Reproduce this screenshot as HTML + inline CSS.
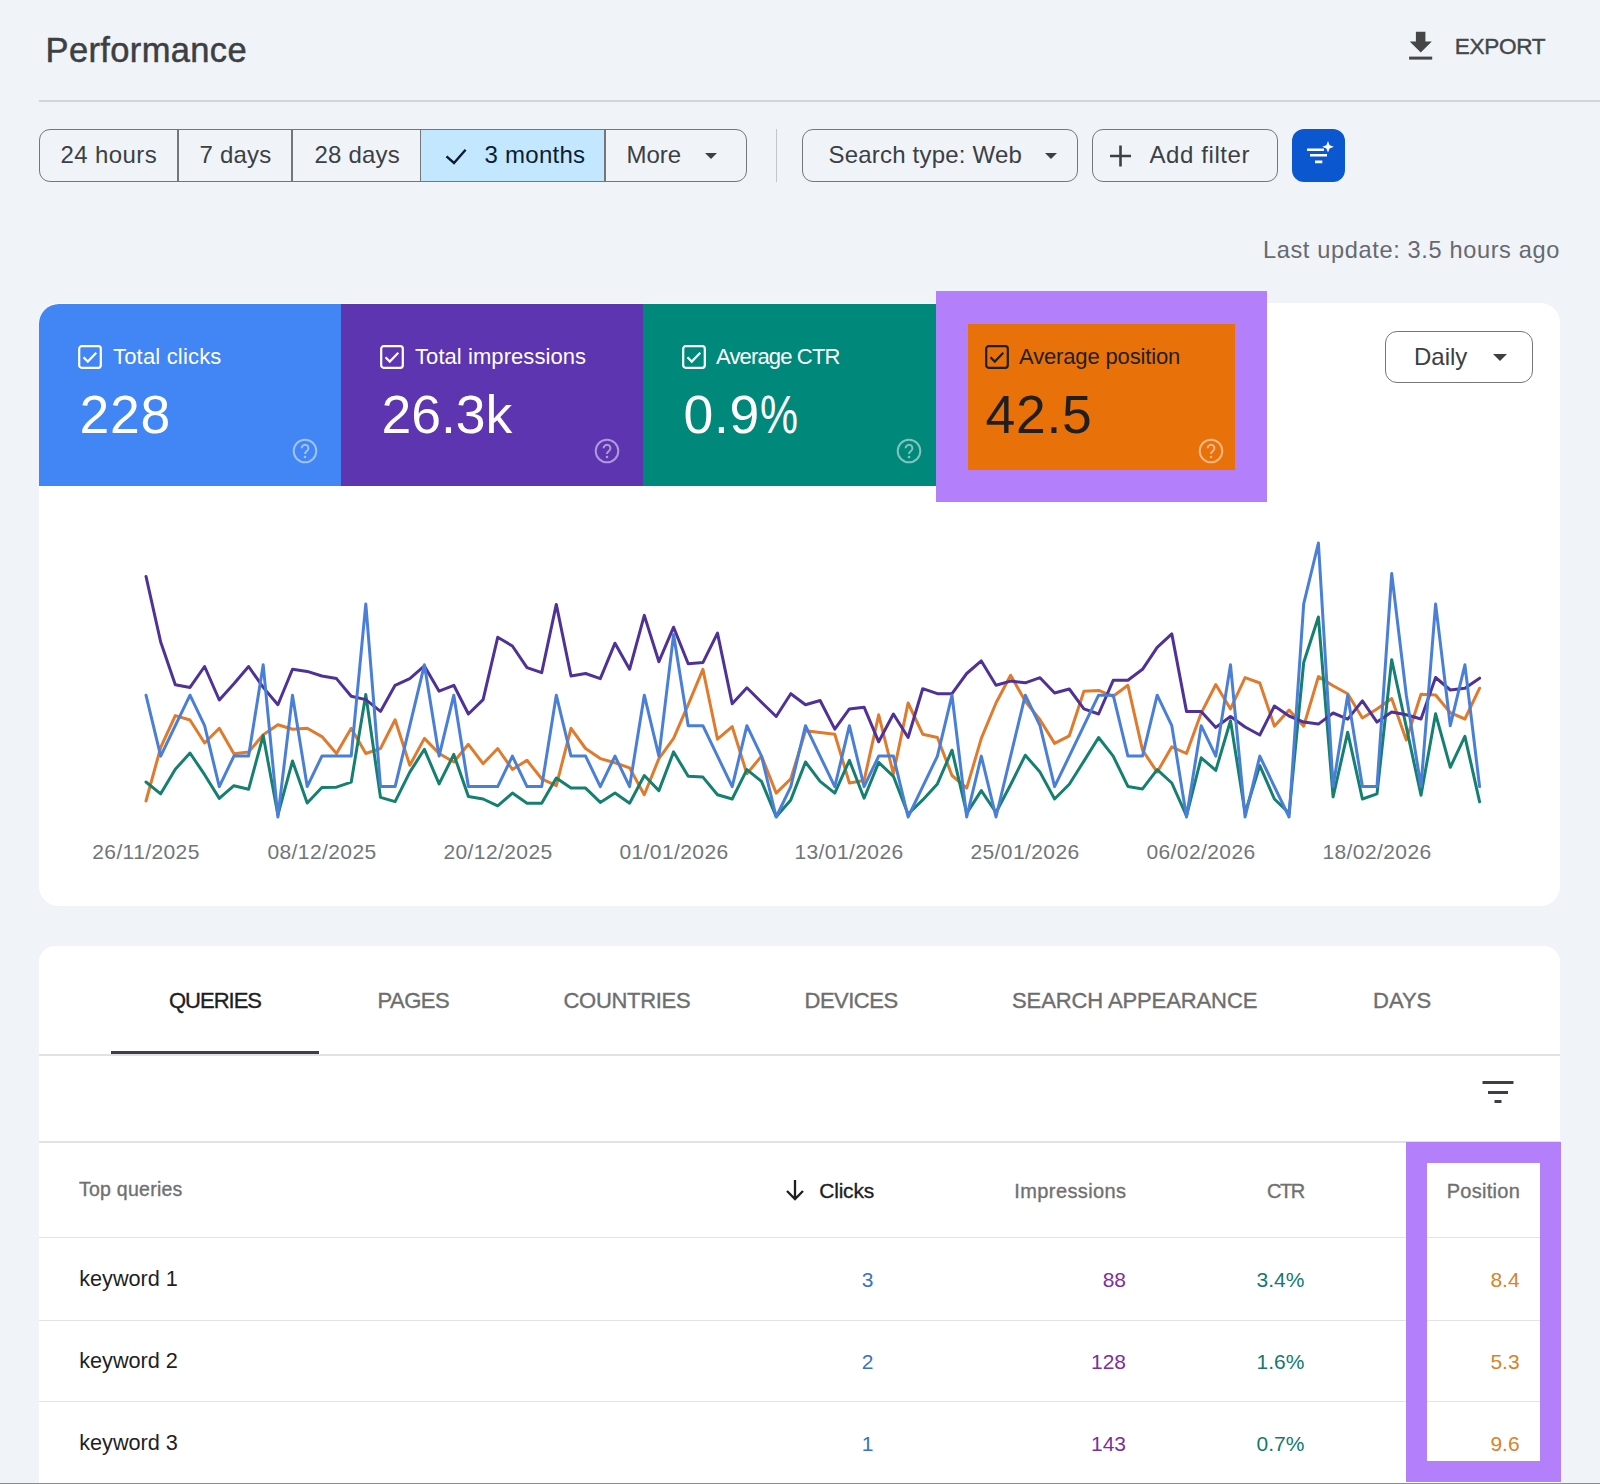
<!DOCTYPE html>
<html><head><meta charset="utf-8"><style>
html,body{margin:0;padding:0;}
body{width:1600px;height:1484px;position:relative;overflow:hidden;background:#f0f4f9;font-family:"Liberation Sans", sans-serif;}
.t{position:absolute;white-space:nowrap;line-height:1;}
</style></head><body>
<div class="t" style="left:45.6px;top:33.0px;font-size:34.5px;color:#3c4043;letter-spacing:0.35px;-webkit-text-stroke:0.5px currentColor;">Performance</div>
<div class="t" style="left:1454.8px;top:36.2px;font-size:22.6px;color:#444746;letter-spacing:-0.35px;-webkit-text-stroke:0.4px currentColor;">EXPORT</div>
<svg style="position:absolute;left:1405px;top:28px" width="32" height="36" viewBox="0 0 32 36"><path d="M10.9 3.8h9.5v9.6h6.4L15.75 24.6 4.7 13.4h6.2z" fill="#444746"/><rect x="4.1" y="28.6" width="23.1" height="3" fill="#444746"/></svg>
<div style="position:absolute;left:39px;top:100px;width:1561px;height:2px;background:#d1d5db;"></div>
<div style="position:absolute;left:38.8px;top:129.2px;width:708px;height:52.6px;box-sizing:border-box;border:1.5px solid #74777a;border-radius:11px;overflow:hidden;"><div style="position:absolute;left:380.8px;top:0;width:183.5px;height:100%;background:#c2e7ff;"></div><div style="position:absolute;left:137.35px;top:0;width:1.5px;height:100%;background:#74777a;"></div><div style="position:absolute;left:251.6px;top:0;width:1.5px;height:100%;background:#74777a;"></div><div style="position:absolute;left:380.05px;top:0;width:1.5px;height:100%;background:#74777a;"></div><div style="position:absolute;left:564.25px;top:0;width:1.5px;height:100%;background:#74777a;"></div></div>
<div class="t" style="left:60.5px;top:143.0px;font-size:24px;color:#3c4043;letter-spacing:0.4px;">24 hours</div>
<div class="t" style="left:199.5px;top:143.0px;font-size:24px;color:#3c4043;letter-spacing:0.22px;">7 days</div>
<div class="t" style="left:314.5px;top:143.0px;font-size:24px;color:#3c4043;letter-spacing:0.18px;">28 days</div>
<div class="t" style="left:484.5px;top:143.0px;font-size:24px;color:#0b1d33;letter-spacing:0.27px;">3 months</div>
<svg style="position:absolute;left:443px;top:145px" width="26" height="22" viewBox="0 0 26 22"><path d="M3.5 11.3L11 18 22.6 4.7" fill="none" stroke="#0b1d33" stroke-width="2.4"/></svg>
<div class="t" style="left:626.5px;top:143.0px;font-size:24px;color:#3c4043;">More</div>
<svg style="position:absolute;left:705.2px;top:152.6px" width="12" height="6" viewBox="0 0 12 6"><path d="M0 0h12L6.0 6z" fill="#3c4043"/></svg>
<div style="position:absolute;left:775.5px;top:129px;width:1.5px;height:53px;background:#c4c7c9;"></div>
<div style="position:absolute;left:802px;top:129.2px;width:276px;height:52.6px;box-sizing:border-box;border:1.5px solid #74777a;border-radius:11px;"></div>
<div class="t" style="left:828.5px;top:143.0px;font-size:24px;color:#3c4043;letter-spacing:0.2px;">Search type: Web</div>
<svg style="position:absolute;left:1044.8px;top:152.6px" width="12" height="6" viewBox="0 0 12 6"><path d="M0 0h12L6.0 6z" fill="#3c4043"/></svg>
<div style="position:absolute;left:1092px;top:129.2px;width:185.5px;height:52.6px;box-sizing:border-box;border:1.5px solid #74777a;border-radius:11px;"></div>
<svg style="position:absolute;left:1108px;top:144px" width="24" height="24" viewBox="0 0 24 24"><path d="M12.5 1.5v21M2 12h21" stroke="#3c4043" stroke-width="2.6"/></svg>
<div class="t" style="left:1149.5px;top:143.0px;font-size:24px;color:#3c4043;letter-spacing:0.59px;">Add filter</div>
<div style="position:absolute;left:1292px;top:129.2px;width:53px;height:52.6px;border-radius:12px;background:#0b57d0;"></div>
<svg style="position:absolute;left:1300px;top:136px" width="40" height="34" viewBox="0 0 40 34"><path d="M7 13.7h17M10 19.3h17M15 25.9h7.3" stroke="#ffffff" stroke-width="2.6"/><path d="M28 5l1.6 4.2 4.2 1.6-4.2 1.6L28 16.6l-1.6-4.2-4.2-1.6 4.2-1.6z" fill="#ffffff"/></svg>
<div class="t" style="right:40.0px;top:238.6px;font-size:23.6px;color:#67696e;letter-spacing:0.63px;">Last update: 3.5 hours ago</div>
<div style="position:absolute;left:39px;top:303px;width:1521px;height:603px;background:#ffffff;border-radius:20px;"></div>
<div style="position:absolute;left:39px;top:304px;width:302px;height:182px;background:#4285f4;border-top-left-radius:20px;"></div>
<div style="position:absolute;left:341px;top:304px;width:302px;height:182px;background:#5e35b1;"></div>
<div style="position:absolute;left:643px;top:304px;width:293px;height:182px;background:#00897b;"></div>
<div style="position:absolute;left:936px;top:291px;width:331px;height:211px;background:#b37ffa;"></div>
<div style="position:absolute;left:968px;top:324px;width:267px;height:146px;background:#e8710a;"></div>
<svg style="position:absolute;left:78px;top:345px" width="24" height="24" viewBox="0 0 24 24"><rect x="1.2" y="1.2" width="21.6" height="21.6" rx="2.5" fill="none" stroke="#ffffff" stroke-width="2.2"/><path d="M5.5 12.3l4.3 4.3 8.5-8.8" fill="none" stroke="#ffffff" stroke-width="2.2"/></svg>
<div class="t" style="left:113.0px;top:345.9px;font-size:22px;color:#ffffff;letter-spacing:0.18px;">Total clicks</div>
<div class="t" style="left:79.5px;top:388.0px;font-size:53.5px;color:#ffffff;letter-spacing:0.7px;">228</div>
<svg style="position:absolute;left:292.3px;top:438.3px" width="26" height="26" viewBox="0 0 26 26"><circle cx="13" cy="13" r="11.3" fill="none" stroke="rgba(255,255,255,0.5)" stroke-width="2"/><path d="M9.6 10.2a3.4 3.4 0 1 1 5.2 2.9c-1.2.8-1.8 1.4-1.8 2.9" fill="none" stroke="rgba(255,255,255,0.5)" stroke-width="2"/><circle cx="13" cy="19" r="1.3" fill="rgba(255,255,255,0.5)"/></svg>
<svg style="position:absolute;left:380px;top:345px" width="24" height="24" viewBox="0 0 24 24"><rect x="1.2" y="1.2" width="21.6" height="21.6" rx="2.5" fill="none" stroke="#ffffff" stroke-width="2.2"/><path d="M5.5 12.3l4.3 4.3 8.5-8.8" fill="none" stroke="#ffffff" stroke-width="2.2"/></svg>
<div class="t" style="left:415.0px;top:345.9px;font-size:22px;color:#ffffff;letter-spacing:0.07px;">Total impressions</div>
<div class="t" style="left:381.5px;top:388.0px;font-size:53.5px;color:#ffffff;letter-spacing:-0.05px;">26.3k</div>
<svg style="position:absolute;left:594.2px;top:438.3px" width="26" height="26" viewBox="0 0 26 26"><circle cx="13" cy="13" r="11.3" fill="none" stroke="rgba(255,255,255,0.5)" stroke-width="2"/><path d="M9.6 10.2a3.4 3.4 0 1 1 5.2 2.9c-1.2.8-1.8 1.4-1.8 2.9" fill="none" stroke="rgba(255,255,255,0.5)" stroke-width="2"/><circle cx="13" cy="19" r="1.3" fill="rgba(255,255,255,0.5)"/></svg>
<svg style="position:absolute;left:682px;top:345px" width="24" height="24" viewBox="0 0 24 24"><rect x="1.2" y="1.2" width="21.6" height="21.6" rx="2.5" fill="none" stroke="#ffffff" stroke-width="2.2"/><path d="M5.5 12.3l4.3 4.3 8.5-8.8" fill="none" stroke="#ffffff" stroke-width="2.2"/></svg>
<div class="t" style="left:716.0px;top:345.9px;font-size:22px;color:#ffffff;letter-spacing:-0.85px;">Average CTR</div>
<div class="t" style="left:683.5px;top:388.0px;font-size:53.5px;color:#ffffff;letter-spacing:0.7px;">0.9<span style="display:inline-block;transform:scaleX(0.8);transform-origin:0 0;">%</span></div>
<svg style="position:absolute;left:895.7px;top:438.3px" width="26" height="26" viewBox="0 0 26 26"><circle cx="13" cy="13" r="11.3" fill="none" stroke="rgba(255,255,255,0.5)" stroke-width="2"/><path d="M9.6 10.2a3.4 3.4 0 1 1 5.2 2.9c-1.2.8-1.8 1.4-1.8 2.9" fill="none" stroke="rgba(255,255,255,0.5)" stroke-width="2"/><circle cx="13" cy="19" r="1.3" fill="rgba(255,255,255,0.5)"/></svg>
<svg style="position:absolute;left:985px;top:345px" width="24" height="24" viewBox="0 0 24 24"><rect x="1.2" y="1.2" width="21.6" height="21.6" rx="2.5" fill="none" stroke="#1f1f1f" stroke-width="2.2"/><path d="M5.5 12.3l4.3 4.3 8.5-8.8" fill="none" stroke="#1f1f1f" stroke-width="2.2"/></svg>
<div class="t" style="left:1019.0px;top:345.9px;font-size:22px;color:#1f1f1f;letter-spacing:-0.15px;">Average position</div>
<div class="t" style="left:985.5px;top:388.0px;font-size:53.5px;color:#1f1f1f;letter-spacing:0.7px;">42.5</div>
<svg style="position:absolute;left:1198.4px;top:438.3px" width="26" height="26" viewBox="0 0 26 26"><circle cx="13" cy="13" r="11.3" fill="none" stroke="rgba(255,255,255,0.5)" stroke-width="2"/><path d="M9.6 10.2a3.4 3.4 0 1 1 5.2 2.9c-1.2.8-1.8 1.4-1.8 2.9" fill="none" stroke="rgba(255,255,255,0.5)" stroke-width="2"/><circle cx="13" cy="19" r="1.3" fill="rgba(255,255,255,0.5)"/></svg>
<div style="position:absolute;left:1385px;top:331px;width:148px;height:52px;box-sizing:border-box;border:1.5px solid #74777a;border-radius:12px;background:#fff;"></div>
<div class="t" style="left:1414.0px;top:344.7px;font-size:24px;color:#3c4043;">Daily</div>
<svg style="position:absolute;left:1493.2px;top:354.0px" width="14" height="7" viewBox="0 0 14 7"><path d="M0 0h14L7.0 7z" fill="#3c4043"/></svg>
<svg style="position:absolute;left:0;top:0" width="1600" height="906" viewBox="0 0 1600 906"><polyline points="146.0,801.0 160.7,747.4 175.3,715.6 190.0,720.0 204.6,743.0 219.3,728.3 233.9,753.8 248.6,752.0 263.2,734.7 277.9,724.7 292.5,729.2 307.2,728.3 321.9,736.6 336.5,753.5 351.2,728.3 365.8,753.5 380.5,748.5 395.1,719.8 409.8,765.3 424.4,738.4 439.1,753.5 453.8,762.0 468.4,744.3 483.1,763.7 497.7,748.5 512.4,769.5 527.0,760.3 541.7,778.8 556.3,785.6 571.0,728.3 585.6,748.5 600.3,758.6 615.0,762.8 629.6,767.9 644.3,794.8 658.9,758.6 673.6,738.4 688.2,704.7 702.9,669.3 717.5,739.2 732.2,726.6 746.9,773.8 761.5,756.1 776.2,793.1 790.8,778.8 805.5,730.8 820.1,732.5 834.8,734.2 849.4,783.0 864.1,780.5 878.7,714.8 893.4,773.8 908.1,703.0 922.7,734.2 937.4,737.5 952.0,775.5 966.7,788.1 981.3,738.4 996.0,703.0 1010.6,675.2 1025.3,701.3 1040.0,719.8 1054.6,743.4 1069.3,735.8 1083.9,691.2 1098.6,690.4 1113.2,696.3 1127.9,685.3 1142.5,750.2 1157.2,772.1 1171.8,746.8 1186.5,753.5 1201.2,713.1 1215.8,684.5 1230.5,708.9 1245.1,677.6 1259.8,683.0 1274.4,726.2 1289.1,710.0 1303.7,726.2 1318.4,676.6 1333.1,685.7 1347.7,693.8 1362.4,718.0 1377.0,709.0 1391.7,698.5 1406.3,740.0 1421.0,694.2 1435.6,695.0 1450.3,712.7 1464.9,719.0 1479.6,688.2" fill="none" stroke="#e07a2c" stroke-width="3" stroke-linejoin="round" stroke-linecap="round"/><polyline points="146.0,782.0 160.7,793.8 175.3,769.3 190.0,753.0 204.6,774.7 219.3,798.4 233.9,785.7 248.6,789.3 263.2,735.6 277.9,814.8 292.5,761.0 307.2,803.0 321.9,787.5 336.5,787.2 351.2,782.2 365.8,694.6 380.5,797.4 395.1,801.6 409.8,772.1 424.4,749.3 439.1,783.9 453.8,754.4 468.4,796.5 483.1,799.0 497.7,805.8 512.4,793.1 527.0,803.2 541.7,803.2 556.3,778.0 571.0,788.1 585.6,788.1 600.3,802.4 615.0,793.1 629.6,803.2 644.3,775.5 658.9,790.6 673.6,751.9 688.2,776.3 702.9,777.1 717.5,794.8 732.2,799.0 746.9,769.6 761.5,781.3 776.2,816.7 790.8,799.9 805.5,762.0 820.1,781.3 834.8,793.1 849.4,760.3 864.1,798.2 878.7,762.4 893.4,776.3 908.1,814.2 922.7,799.9 937.4,783.9 952.0,750.2 966.7,813.4 981.3,790.6 996.0,812.5 1010.6,784.7 1025.3,755.2 1040.0,772.1 1054.6,799.0 1069.3,784.3 1083.9,761.1 1098.6,737.5 1113.2,756.1 1127.9,786.4 1142.5,788.9 1157.2,769.6 1171.8,783.0 1186.5,815.9 1201.2,757.8 1215.8,770.4 1230.5,720.7 1245.1,813.0 1259.8,765.6 1274.4,799.0 1289.1,813.1 1303.7,662.5 1318.4,617.0 1333.1,797.0 1347.7,732.2 1362.4,799.0 1377.0,793.9 1391.7,659.7 1406.3,727.0 1421.0,795.3 1435.6,713.8 1450.3,767.3 1464.9,736.4 1479.6,801.8" fill="none" stroke="#15806f" stroke-width="3" stroke-linejoin="round" stroke-linecap="round"/><polyline points="146.0,576.4 160.7,642.0 175.3,684.7 190.0,687.4 204.6,666.5 219.3,700.0 233.9,683.7 248.6,666.5 263.2,687.4 277.9,704.7 292.5,669.2 307.2,671.4 321.9,676.0 336.5,678.6 351.2,696.3 365.8,699.6 380.5,711.4 395.1,685.3 409.8,678.6 424.4,665.9 439.1,691.2 453.8,685.3 468.4,714.0 483.1,699.6 497.7,637.3 512.4,646.0 527.0,667.6 541.7,672.7 556.3,604.4 571.0,676.0 585.6,673.5 600.3,678.6 615.0,643.2 629.6,669.3 644.3,615.4 658.9,661.7 673.6,627.2 688.2,663.8 702.9,662.6 717.5,633.1 732.2,703.8 746.9,687.8 761.5,702.2 776.2,716.5 790.8,693.7 805.5,704.7 820.1,700.5 834.8,729.1 849.4,708.9 864.1,707.2 878.7,741.8 893.4,714.0 908.1,737.5 922.7,688.7 937.4,693.7 952.0,693.7 966.7,673.5 981.3,660.9 996.0,685.3 1010.6,681.1 1025.3,682.8 1040.0,677.7 1054.6,693.0 1069.3,689.0 1083.9,708.9 1098.6,714.0 1113.2,680.3 1127.9,680.3 1142.5,669.3 1157.2,647.4 1171.8,633.9 1186.5,711.4 1201.2,711.4 1215.8,727.4 1230.5,716.5 1245.1,727.0 1259.8,735.0 1274.4,706.0 1289.1,716.0 1303.7,722.1 1318.4,724.1 1333.1,713.0 1347.7,719.1 1362.4,700.9 1377.0,722.1 1391.7,712.0 1406.3,714.8 1421.0,719.0 1435.6,677.5 1450.3,690.0 1464.9,688.2 1479.6,678.2" fill="none" stroke="#4f3298" stroke-width="3" stroke-linejoin="round" stroke-linecap="round"/><polyline points="146.0,695.2 160.7,756.1 175.3,725.7 190.0,695.2 204.6,725.7 219.3,786.6 233.9,756.1 248.6,756.1 263.2,664.8 277.9,817.0 292.5,695.2 307.2,786.6 321.9,756.1 336.5,756.1 351.2,756.1 365.8,603.9 380.5,786.6 395.1,786.6 409.8,725.7 424.4,664.8 439.1,756.1 453.8,695.2 468.4,786.6 483.1,786.6 497.7,786.6 512.4,756.1 527.0,786.6 541.7,786.6 556.3,695.2 571.0,756.1 585.6,756.1 600.3,786.6 615.0,756.1 629.6,786.6 644.3,695.2 658.9,756.1 673.6,634.4 688.2,725.7 702.9,725.7 717.5,756.1 732.2,786.6 746.9,725.7 761.5,756.1 776.2,817.0 790.8,786.6 805.5,725.7 820.1,756.1 834.8,786.6 849.4,725.7 864.1,786.6 878.7,756.1 893.4,756.1 908.1,817.0 922.7,786.6 937.4,756.1 952.0,695.2 966.7,817.0 981.3,756.1 996.0,817.0 1010.6,756.1 1025.3,695.2 1040.0,725.7 1054.6,786.6 1069.3,756.1 1083.9,725.7 1098.6,695.2 1113.2,695.2 1127.9,756.1 1142.5,756.1 1157.2,695.2 1171.8,725.7 1186.5,817.0 1201.2,725.7 1215.8,756.1 1230.5,664.8 1245.1,817.0 1259.8,756.1 1274.4,786.6 1289.1,817.0 1303.7,603.9 1318.4,543.0 1333.1,786.6 1347.7,695.2 1362.4,786.6 1377.0,786.6 1391.7,573.5 1406.3,695.2 1421.0,786.6 1435.6,603.9 1450.3,725.7 1464.9,664.8 1479.6,786.6" fill="none" stroke="#4a7fd8" stroke-width="3" stroke-linejoin="round" stroke-linecap="round"/></svg>
<div class="t" style="left:146.0px;transform:translateX(-50%);top:841.3px;font-size:21px;color:#70757a;letter-spacing:0.4px;">26/11/2025</div>
<div class="t" style="left:322.0px;transform:translateX(-50%);top:841.3px;font-size:21px;color:#70757a;letter-spacing:0.4px;">08/12/2025</div>
<div class="t" style="left:498.0px;transform:translateX(-50%);top:841.3px;font-size:21px;color:#70757a;letter-spacing:0.4px;">20/12/2025</div>
<div class="t" style="left:674.0px;transform:translateX(-50%);top:841.3px;font-size:21px;color:#70757a;letter-spacing:0.4px;">01/01/2026</div>
<div class="t" style="left:849.0px;transform:translateX(-50%);top:841.3px;font-size:21px;color:#70757a;letter-spacing:0.4px;">13/01/2026</div>
<div class="t" style="left:1025.0px;transform:translateX(-50%);top:841.3px;font-size:21px;color:#70757a;letter-spacing:0.4px;">25/01/2026</div>
<div class="t" style="left:1201.0px;transform:translateX(-50%);top:841.3px;font-size:21px;color:#70757a;letter-spacing:0.4px;">06/02/2026</div>
<div class="t" style="left:1377.0px;transform:translateX(-50%);top:841.3px;font-size:21px;color:#70757a;letter-spacing:0.4px;">18/02/2026</div>
<div style="position:absolute;left:39px;top:946px;width:1521px;height:560px;background:#ffffff;border-radius:16px;"></div>
<div class="t" style="left:169.0px;top:990.4px;font-size:22px;color:#1f1f1f;letter-spacing:-1.0px;-webkit-text-stroke:0.35px currentColor;">QUERIES</div>
<div class="t" style="left:377.5px;top:990.4px;font-size:22px;color:#6e6e6e;letter-spacing:-0.5px;-webkit-text-stroke:0.35px currentColor;">PAGES</div>
<div class="t" style="left:563.5px;top:990.4px;font-size:22px;color:#6e6e6e;letter-spacing:-0.3px;-webkit-text-stroke:0.35px currentColor;">COUNTRIES</div>
<div class="t" style="left:804.5px;top:990.4px;font-size:22px;color:#6e6e6e;letter-spacing:-0.5px;-webkit-text-stroke:0.35px currentColor;">DEVICES</div>
<div class="t" style="left:1012.0px;top:990.4px;font-size:22px;color:#6e6e6e;letter-spacing:-0.1px;-webkit-text-stroke:0.35px currentColor;">SEARCH APPEARANCE</div>
<div class="t" style="left:1373.0px;top:990.4px;font-size:22px;color:#6e6e6e;-webkit-text-stroke:0.35px currentColor;">DAYS</div>
<div style="position:absolute;left:111px;top:1051px;width:208px;height:3px;background:#3c4043;"></div>
<div style="position:absolute;left:39px;top:1054px;width:1521px;height:1.5px;background:#e0e2e6;"></div>
<svg style="position:absolute;left:1480px;top:1078px" width="36" height="28" viewBox="0 0 36 28"><path d="M2.5 4.5h31M8 14.5h20M14.5 23.5h7" stroke="#3c4043" stroke-width="2.8"/></svg>
<div style="position:absolute;left:39px;top:1141px;width:1521px;height:1.5px;background:#e0e2e6;"></div>
<div class="t" style="left:79.0px;top:1180.3px;font-size:19.5px;color:#707070;letter-spacing:0.25px;-webkit-text-stroke:0.35px currentColor;">Top queries</div>
<svg style="position:absolute;left:783px;top:1178px" width="24" height="24" viewBox="0 0 24 24"><path d="M12 2v19M4 13l8 8 8-8" fill="none" stroke="#1f1f1f" stroke-width="2.3"/></svg>
<div class="t" style="right:726.0px;top:1180.4px;font-size:21px;color:#1f1f1f;letter-spacing:-0.2px;-webkit-text-stroke:0.35px currentColor;">Clicks</div>
<div class="t" style="right:473.5px;top:1181.3px;font-size:20px;color:#707070;letter-spacing:0.4px;-webkit-text-stroke:0.35px currentColor;">Impressions</div>
<div class="t" style="right:296.2px;top:1181.3px;font-size:20px;color:#707070;letter-spacing:-1.4px;-webkit-text-stroke:0.35px currentColor;">CTR</div>
<div style="position:absolute;left:39px;top:1237px;width:1521px;height:1.2000000000000455px;background:#e3e3e3;"></div>
<div style="position:absolute;left:39px;top:1319.5px;width:1521px;height:1.2000000000000455px;background:#e3e3e3;"></div>
<div style="position:absolute;left:39px;top:1401px;width:1521px;height:1.2000000000000455px;background:#e3e3e3;"></div>
<div class="t" style="left:79.3px;top:1268.0px;font-size:21.7px;color:#1f1f1f;letter-spacing:-0.05px;">keyword 1</div>
<div class="t" style="right:726.6px;top:1269.0px;font-size:21px;color:#3a73c4;">3</div>
<div class="t" style="right:474.0px;top:1269.0px;font-size:21px;color:#7b2fa3;">88</div>
<div class="t" style="right:295.6px;top:1269.0px;font-size:21px;color:#127a6e;">3.4%</div>
<div class="t" style="left:79.3px;top:1350.4px;font-size:21.7px;color:#1f1f1f;letter-spacing:-0.05px;">keyword 2</div>
<div class="t" style="right:726.6px;top:1351.4px;font-size:21px;color:#3a73c4;">2</div>
<div class="t" style="right:474.0px;top:1351.4px;font-size:21px;color:#7b2fa3;">128</div>
<div class="t" style="right:295.6px;top:1351.4px;font-size:21px;color:#127a6e;">1.6%</div>
<div class="t" style="left:79.3px;top:1431.8px;font-size:21.7px;color:#1f1f1f;letter-spacing:-0.05px;">keyword 3</div>
<div class="t" style="right:726.6px;top:1432.8px;font-size:21px;color:#3a73c4;">1</div>
<div class="t" style="right:474.0px;top:1432.8px;font-size:21px;color:#7b2fa3;">143</div>
<div class="t" style="right:295.6px;top:1432.8px;font-size:21px;color:#127a6e;">0.7%</div>
<div style="position:absolute;left:1406px;top:1141.5px;width:155px;height:340.5px;background:#b37ffa;"></div>
<div style="position:absolute;left:1427px;top:1163px;width:113px;height:298px;background:#ffffff;"></div>
<div style="position:absolute;left:1427px;top:1237px;width:113px;height:1.2000000000000455px;background:#e3e3e3;"></div>
<div style="position:absolute;left:1427px;top:1319.5px;width:113px;height:1.2000000000000455px;background:#e3e3e3;"></div>
<div style="position:absolute;left:1427px;top:1401px;width:113px;height:1.2000000000000455px;background:#e3e3e3;"></div>
<div class="t" style="right:79.8px;top:1181.3px;font-size:20px;color:#707070;letter-spacing:0.3px;-webkit-text-stroke:0.35px currentColor;">Position</div>
<div class="t" style="right:80.4px;top:1269.0px;font-size:21px;color:#d9822b;">8.4</div>
<div class="t" style="right:80.4px;top:1351.4px;font-size:21px;color:#d9822b;">5.3</div>
<div class="t" style="right:80.4px;top:1432.8px;font-size:21px;color:#d9822b;">9.6</div>
<div style="position:absolute;left:0px;top:1482.5px;width:1600px;height:1.5px;background:#8a8d91;"></div>
</body></html>
